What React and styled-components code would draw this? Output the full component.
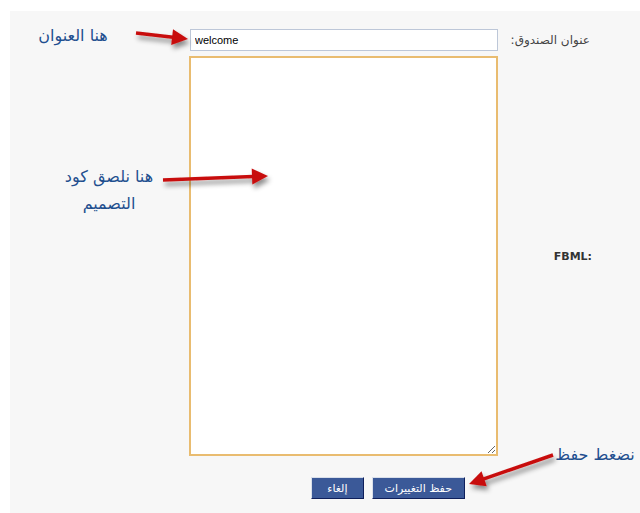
import React from 'react';
import styled, { createGlobalStyle } from 'styled-components';

const GlobalStyle = createGlobalStyle`
  html, body {
    margin: 0;
    padding: 0;
    background: #fff;
  }
`;

const Page = styled.div`
  position: relative;
  width: 640px;
  height: 513px;
  overflow: hidden;
  background: #fff;
`;

const Panel = styled.div`
  margin: 11px 0 0 10px;
  height: 502px;
  box-sizing: border-box;
  padding-top: 18px;
  background: #f7f7f7;
  direction: rtl;
`;

const Form = styled.div`
  display: grid;
  grid-template-columns: 142px 308px;
  row-gap: 5px;
`;

const Label = styled.label`
  align-self: center;
  padding: 0 ${(p) => (p.$bold ? 48 : 50)}px 0 8px;
  text-align: right;
  font-family: "DejaVu Sans", Tahoma, sans-serif;
  font-size: ${(p) => (p.$bold ? 11 : 12)}px;
  font-weight: ${(p) => (p.$bold ? 700 : 400)};
  color: ${(p) => (p.$bold ? '#333' : '#444')};
`;

const TitleInput = styled.input`
  box-sizing: border-box;
  width: 308px;
  height: 22px;
  margin: 0;
  padding: 2px 4px;
  border: 1px solid #bdc7d8;
  background: #fff;
  direction: ltr;
  font-family: "Liberation Sans", Arial, sans-serif;
  font-size: 11px;
  color: #000;
  outline: none;
`;

const CodeArea = styled.textarea`
  box-sizing: border-box;
  display: block;
  width: 309px;
  height: 400px;
  margin: 0;
  padding: 4px;
  border: 2px solid #e9bc70;
  background: #fff;
  direction: ltr;
  font-family: "Liberation Mono", monospace;
  font-size: 11px;
  outline: none;
`;

const Buttons = styled.div`
  grid-column: 2;
  display: flex;
  gap: 8px;
  margin-top: 16px;
  padding-right: 33px;
`;

const Button = styled.button`
  box-sizing: border-box;
  height: 22px;
  padding: 0 ${(p) => (p.$wide ? 12 : 15)}px;
  border: 1px solid;
  border-color: #d9dfea #0e1f5b #0e1f5b #d9dfea;
  background: #3b5998;
  color: #fff;
  font-family: "DejaVu Sans", Tahoma, sans-serif;
  font-size: 11px;
  cursor: pointer;
`;

const Note = styled.div`
  position: absolute;
  top: ${(p) => p.$top}px;
  left: ${(p) => p.$left}px;
  width: ${(p) => p.$width}px;
  direction: rtl;
  text-align: center;
  font-family: "DejaVu Sans", Arial, sans-serif;
  font-size: 16px;
  line-height: 27px;
  color: #1f4f8f;
`;

const Overlay = styled.svg`
  position: absolute;
  top: 0;
  left: 0;
  pointer-events: none;
`;

const Arrow = ({ from, to }) => {
  const [x1, y1] = from;
  const [x2, y2] = to;
  const len = Math.hypot(x2 - x1, y2 - y1);
  const ux = (x2 - x1) / len;
  const uy = (y2 - y1) / len;
  const headLen = 16;
  const half = 8;
  const bx = x2 - ux * headLen;
  const by = y2 - uy * headLen;
  const head = [
    [x2, y2],
    [bx - uy * half, by + ux * half],
    [bx + uy * half, by - ux * half],
  ]
    .map((p) => p.join(','))
    .join(' ');
  return (
    <g filter="url(#shadow)">
      <line x1={x1} y1={y1} x2={bx + ux} y2={by + uy} stroke="#c80f0f" strokeWidth="3.5" />
      <polygon points={head} fill="#c80f0f" />
    </g>
  );
};

export default function App() {
  return (
    <Page>
      <GlobalStyle />
      <Panel>
        <Form>
          <Label htmlFor="box-title">عنوان الصندوق:</Label>
          <TitleInput id="box-title" defaultValue="welcome" />

          <Label htmlFor="fbml" $bold>
            <bdi dir="ltr">FBML:</bdi>
          </Label>
          <CodeArea id="fbml" />

          <Buttons>
            <Button $wide>حفظ التغييرات</Button>
            <Button>إلغاء</Button>
          </Buttons>
        </Form>
      </Panel>

      <Note $top={22} $left={30} $width={86}>هنا العنوان</Note>
      <Note $top={163} $left={51} $width={116}>
        هنا نلصق كود
        <br />
        التصميم
      </Note>
      <Note $top={441} $left={550} $width={90}>نضغط حفظ</Note>

      <Overlay width="640" height="513">
        <defs>
          <filter id="shadow" x="-20%" y="-50%" width="140%" height="250%">
            <feDropShadow dx="2" dy="4" stdDeviation="2.5" floodColor="#000" floodOpacity="0.45" />
          </filter>
        </defs>
        <Arrow from={[136, 33]} to={[188, 39]} />
        <Arrow from={[163, 180]} to={[268, 176]} />
        <Arrow from={[553, 455]} to={[469, 484]} />
      </Overlay>
    </Page>
  );
}
